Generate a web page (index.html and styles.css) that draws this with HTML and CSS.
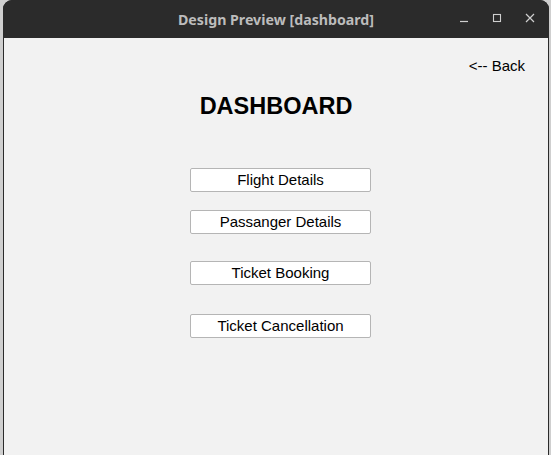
FILE: index.html
```html
<!DOCTYPE html>
<html>
<head>
<meta charset="utf-8">
<link rel="stylesheet" href="styles.css">
</head>
<body>
<div class="desk">
  <div class="window">
    <div class="titlebar">
      <div class="title">Design Preview [dashboard]</div>
      <div class="controls">
        <svg class="ctl" width="10" height="10" viewBox="0 0 10 10"><path d="M1 8.5H9" stroke="#cfcfcf" stroke-width="1.2"/></svg>
        <svg class="ctl" width="10" height="10" viewBox="0 0 10 10"><rect x="1.5" y="1.5" width="7" height="7" fill="none" stroke="#cfcfcf" stroke-width="1.1"/></svg>
        <svg class="ctl" width="10" height="10" viewBox="0 0 10 10"><path d="M1 1L9 9M9 1L1 9" stroke="#cfcfcf" stroke-width="1.2"/></svg>
      </div>
    </div>
    <div class="content">
      <div class="backrow"><span class="back">&lt;-- Back</span></div>
      <h1 class="heading">DASHBOARD</h1>
      <div class="menu">
        <button class="btn first">Flight Details</button>
        <button class="btn second">Passanger Details</button>
        <button class="btn third">Ticket Booking</button>
        <button class="btn fourth">Ticket Cancellation</button>
      </div>
    </div>
  </div>
</div>
</body>
</html>
```

FILE: styles.css
```css
html, body {
  margin: 0;
  padding: 0;
  height: 100%;
  overflow: hidden;
}
body {
  background: #cfcfcf;
  font-family: "Liberation Sans", Arial, sans-serif;
}
.desk {
  height: 455px;
  display: flex;
}
.window {
  margin-left: 3px;
  width: 546px;
  height: 455px;
  display: flex;
  flex-direction: column;
  background: #2b2b2b;
  border-radius: 9px 9px 0 0;
  overflow: hidden;
}
.titlebar {
  height: 38px;
  flex: none;
  position: relative;
  display: flex;
  align-items: center;
  justify-content: center;
  background: #2b2b2b;
}
.title {
  font-family: "Noto Sans", "DejaVu Sans", sans-serif;
  font-weight: bold;
  font-size: 14.2px;
  color: #bcbcbc;
  margin-top: 1px;
}
.controls {
  position: absolute;
  right: 14px;
  top: 13px;
  display: flex;
  gap: 23px;
}
.ctl {
  display: block;
}
.content {
  flex: 1;
  background: #f2f2f2;
  margin: 0 1px;
  display: flex;
  flex-direction: column;
}
.backrow {
  display: flex;
  justify-content: flex-end;
  padding: 19px 23px 0 0;
}
.back {
  font-size: 15px;
  color: #000;
  line-height: 17px;
}
.heading {
  margin: 18px 0 0 0;
  font-size: 23.5px;
  line-height: 28px;
  font-weight: bold;
  text-align: center;
  color: #000;
}
.menu {
  display: flex;
  flex-direction: column;
  align-items: flex-start;
  padding-left: 186px;
}
.btn {
  width: 181px;
  height: 24px;
  background: #fff;
  border: 1px solid #b5b5b5;
  border-radius: 2px;
  font-family: "Liberation Sans", Arial, sans-serif;
  font-size: 15px;
  color: #000;
  padding: 0;
  line-height: 22px;
}
.first { margin-top: 48px; }
.second { margin-top: 18px; }
.third { margin-top: 27px; }
.fourth { margin-top: 29px; }
```
